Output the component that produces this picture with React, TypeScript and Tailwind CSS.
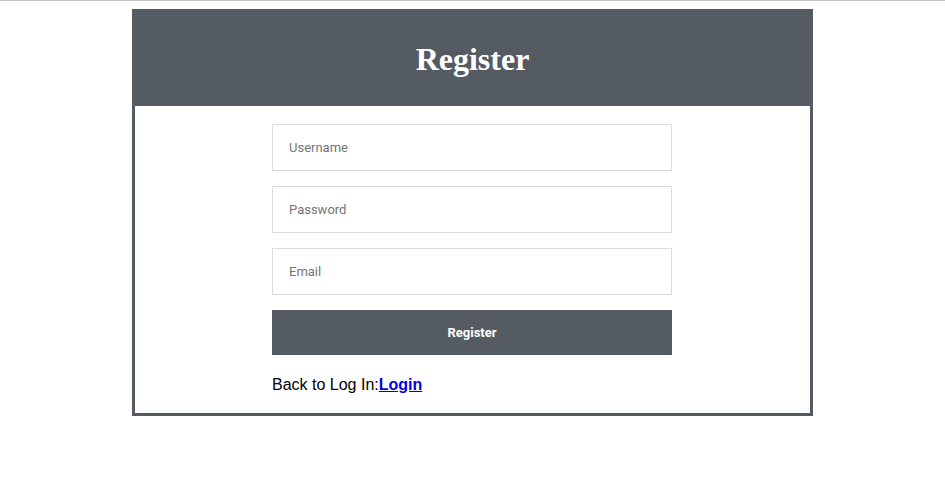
import React from "react";

export default function App() {
  return (
    <div className="min-h-[482px] bg-white border-t border-[#c4c4c4]">
      <div className="mx-auto mt-2 w-[681px] border-[3px] border-[#545b62]">
        <div className="h-[94px] bg-[#545b62] flex items-center justify-center">
          <h1 className="text-[32px] font-bold text-white font-['Liberation_Serif',serif] leading-none">
            Register
          </h1>
        </div>
        <form className="w-[400px] ml-[137px] pt-[18px] pb-[18px] flex flex-col">
          <input
            type="text"
            placeholder="Username"
            className="h-[47px] border border-[#dddddd] px-4 text-[13px] font-['Roboto',sans-serif] placeholder:text-[#757575] outline-none"
          />
          <input
            type="password"
            placeholder="Password"
            className="mt-[15px] h-[47px] border border-[#dddddd] px-4 text-[13px] font-['Roboto',sans-serif] placeholder:text-[#757575] outline-none"
          />
          <input
            type="email"
            placeholder="Email"
            className="mt-[15px] h-[47px] border border-[#dddddd] px-4 text-[13px] font-['Roboto',sans-serif] placeholder:text-[#757575] outline-none"
          />
          <button
            type="button"
            className="mt-[15px] h-[45px] bg-[#545b62] text-white text-[13px] font-bold font-['Roboto',sans-serif]"
          >
            Register
          </button>
          <p className="mt-5 text-[16px] text-black font-['Liberation_Sans',sans-serif] leading-5">
            Back to Log In:
            <a href="#" className="font-bold text-[#0000ee] underline">
              Login
            </a>
          </p>
        </form>
      </div>
    </div>
  );
}
